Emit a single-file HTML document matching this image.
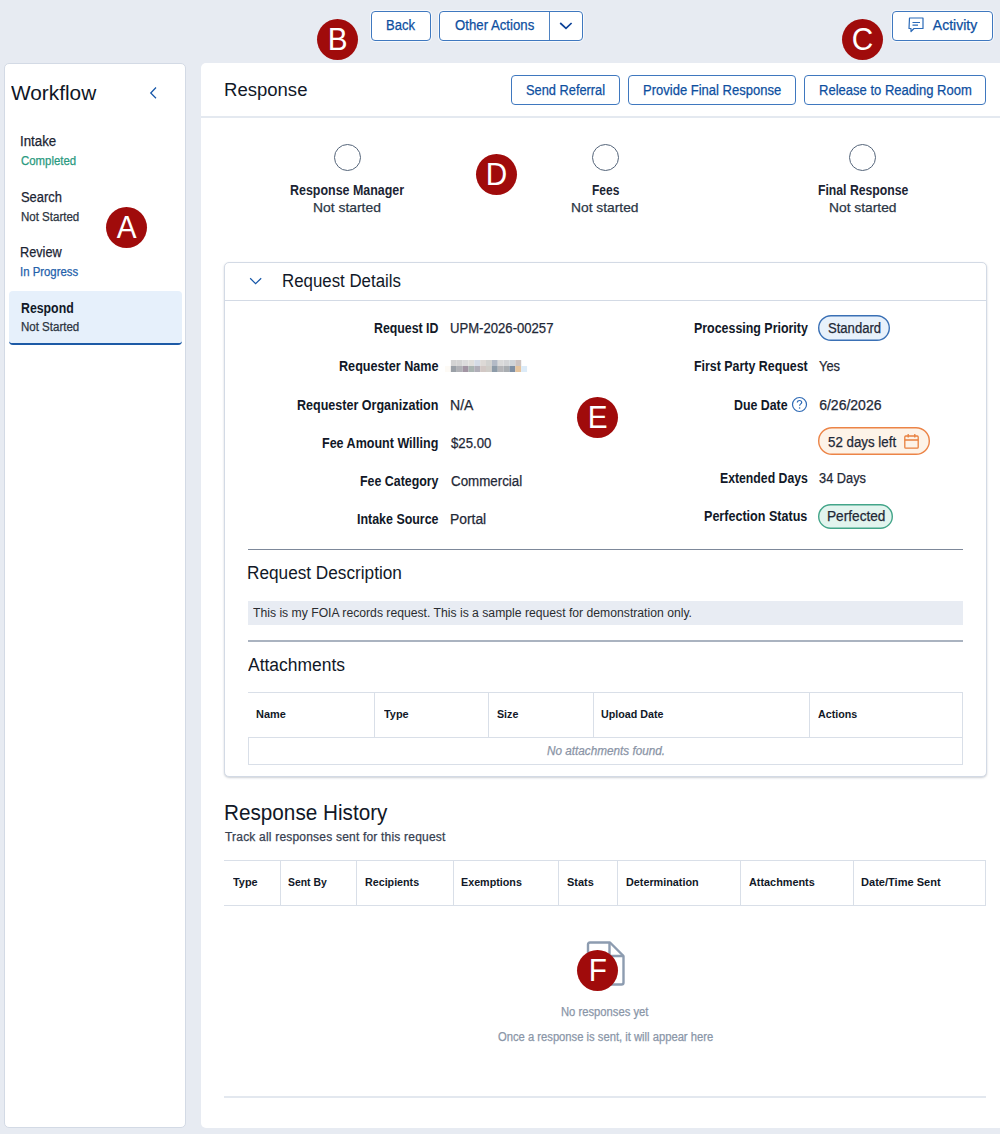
<!DOCTYPE html>
<html><head><meta charset="utf-8">
<style>
*{box-sizing:border-box;margin:0;padding:0}
html,body{width:1000px;height:1134px;overflow:hidden;background:#e7ebf2;font-family:"Liberation Sans",sans-serif}
.a{position:absolute}
.t{position:absolute;white-space:nowrap;line-height:1;transform-origin:0 0}
.btn{position:absolute;background:#fff;border:1px solid #3f78bf;border-radius:4px}
.tb{box-shadow:0 0 0 1px rgba(255,255,255,0.7)}
.mk{position:absolute;width:41px;height:41px;border-radius:50%;background:#a00b0b;color:#fff;font-size:32px;line-height:41px;text-align:center;font-family:"Liberation Sans",sans-serif}
.mk span{display:inline-block;transform:scaleX(0.93)}
.hl{position:absolute;height:1px;background:#d9dfe8}
.vl{position:absolute;width:1px;background:#d9dfe8}
.pill{position:absolute;border-radius:14px;border:1px solid}
.blk{position:absolute;width:6px;height:6px}
</style></head><body>
<!-- top buttons -->
<div class="btn tb" style="left:371px;top:11px;width:60px;height:30px"></div>
<div class="btn tb" style="left:439px;top:11px;width:144px;height:30px"></div>
<div class="a" style="left:549px;top:12px;width:1px;height:28px;background:#4f83c2"></div>
<svg class="a" style="left:556px;top:18px" width="20" height="14" viewBox="0 0 20 14"><path d="M4.2 5 L10 10.3 L15.6 5" fill="none" stroke="#0b4198" stroke-width="1.7"/></svg>
<div class="btn tb" style="left:892px;top:11px;width:101px;height:30px"></div>
<svg class="a" style="left:906px;top:15px" width="20" height="20" viewBox="0 0 20 20"><path d="M3.5 3 H17 V13.5 H8 L5 16.5 V13.5 H3 Z" fill="none" stroke="#2a6ab8" stroke-width="1.2" stroke-linejoin="round"/><path d="M6.5 7.5 H14 M6.5 10.2 H12" stroke="#2a6ab8" stroke-width="1.2"/></svg>

<!-- sidebar -->
<div class="a" style="left:4px;top:63px;width:182px;height:1065px;background:#fff;border:1px solid #d3dae5;border-radius:5px"></div>
<svg class="a" style="left:146px;top:85px" width="14" height="16" viewBox="0 0 14 16"><path d="M10 2.5 L4.75 8 L10 13.2" fill="none" stroke="#1556a8" stroke-width="1.25"/></svg>
<div class="a" style="left:9px;top:291px;width:173px;height:54px;background:#e6f0fb;border-radius:4px;border-bottom:2px solid #1d5aa6"></div>

<!-- main panel -->
<div class="a" style="left:201px;top:63px;width:810px;height:1065px;background:#fff;border-radius:5px"></div>
<div class="a" style="left:201px;top:116px;width:799px;height:2px;background:#e4e9f0"></div>
<div class="btn" style="left:511px;top:75px;width:109px;height:30px"></div>
<div class="btn" style="left:628px;top:75px;width:168px;height:30px"></div>
<div class="btn" style="left:804px;top:75px;width:182px;height:30px"></div>

<!-- steps circles -->
<div class="a" style="left:334px;top:144px;width:27px;height:27px;border-radius:50%;border:1px solid #55657a"></div>
<div class="a" style="left:592px;top:144px;width:27px;height:27px;border-radius:50%;border:1px solid #55657a"></div>
<div class="a" style="left:849px;top:144px;width:27px;height:27px;border-radius:50%;border:1px solid #55657a"></div>

<!-- request details card -->
<div class="a" style="left:224px;top:262px;width:763px;height:515px;background:#fff;border:1px solid #d3dae5;border-radius:5px;box-shadow:0 1px 2px rgba(60,70,90,0.25)"></div>
<div class="a" style="left:225px;top:300px;width:761px;height:1px;background:#d3dae5"></div>
<svg class="a" style="left:248px;top:274px" width="16" height="14" viewBox="0 0 16 14"><path d="M2.15 4.3 L7.6 9.7 L13.2 4.3" fill="none" stroke="#1556a8" stroke-width="1.2"/></svg>

<!-- blurred name -->
<svg class="a" style="left:445px;top:360px" width="84" height="12"><rect x="0" y="6" width="5.88" height="6" fill="#fdfaf5"/><rect x="5.86" y="0" width="5.88" height="6" fill="#d3d3d3"/><rect x="11.72" y="0" width="5.88" height="6" fill="#d4d4d4"/><rect x="17.58" y="0" width="5.88" height="6" fill="#dcdcdc"/><rect x="23.44" y="0" width="5.88" height="6" fill="#e0dfdc"/><rect x="29.30" y="0" width="5.88" height="6" fill="#d5dce6"/><rect x="35.16" y="0" width="5.88" height="6" fill="#ddd9d6"/><rect x="41.02" y="0" width="5.88" height="6" fill="#d2d2d0"/><rect x="46.88" y="0" width="5.88" height="6" fill="#b3bac6"/><rect x="52.74" y="0" width="5.88" height="6" fill="#dadada"/><rect x="58.60" y="0" width="5.88" height="6" fill="#d4d5d7"/><rect x="64.46" y="0" width="5.88" height="6" fill="#d0d4d8"/><rect x="70.32" y="0" width="5.88" height="6" fill="#cdc4c2"/><rect x="5.86" y="6" width="5.88" height="6" fill="#9aa0a7"/><rect x="11.72" y="6" width="5.88" height="6" fill="#b0b1b6"/><rect x="17.58" y="6" width="5.88" height="6" fill="#a295a3"/><rect x="23.44" y="6" width="5.88" height="6" fill="#aab5b2"/><rect x="29.30" y="6" width="5.88" height="6" fill="#b0aeb8"/><rect x="35.16" y="6" width="5.88" height="6" fill="#d2c8c5"/><rect x="41.02" y="6" width="5.88" height="6" fill="#d0cdc8"/><rect x="46.88" y="6" width="5.88" height="6" fill="#8d9ba8"/><rect x="52.74" y="6" width="5.88" height="6" fill="#b5b5b8"/><rect x="58.60" y="6" width="5.88" height="6" fill="#a9adb1"/><rect x="64.46" y="6" width="5.88" height="6" fill="#7f8fa3"/><rect x="70.32" y="6" width="5.88" height="6" fill="#e5c49e"/><rect x="76.18" y="6" width="5.88" height="6" fill="#dcebf8"/></svg>

<!-- pills -->
<svg class="a" style="left:817px;top:314px" width="74" height="28"><rect x="1.7" y="1.7" width="70.6" height="24.6" rx="12.3" fill="#e8f1fb" stroke="#3a70b5" stroke-width="1.4"/></svg>
<svg class="a" style="left:791px;top:396.4px" width="17" height="17" viewBox="0 0 17 17"><circle cx="8.5" cy="8.5" r="7" fill="none" stroke="#2e6ab5" stroke-width="1.2"/><path d="M6.3 6.6 C6.3 5.2 7.3 4.5 8.5 4.5 C9.8 4.5 10.7 5.3 10.7 6.4 C10.7 7.8 8.6 8 8.6 9.7" fill="none" stroke="#2e6ab5" stroke-width="1.2"/><circle cx="8.6" cy="12" r="0.8" fill="#2e6ab5"/></svg>
<svg class="a" style="left:817px;top:426px" width="114" height="30"><rect x="1.7" y="1.7" width="110.6" height="26.6" rx="13.3" fill="#fdf3e8" stroke="#ec8447" stroke-width="1.4"/></svg>
<svg class="a" style="left:903px;top:433px" width="17" height="17" viewBox="0 0 17 17"><rect x="1.8" y="3" width="13.4" height="12.2" rx="1" fill="none" stroke="#e8803f" stroke-width="1.3"/><path d="M1.8 7 H15.2 M5.2 1 V4.5 M11.8 1 V4.5" stroke="#e8803f" stroke-width="1.3"/></svg>
<svg class="a" style="left:817px;top:503px" width="77" height="27"><rect x="1.7" y="1.7" width="73.6" height="23.6" rx="11.8" fill="#e2f4ee" stroke="#43a589" stroke-width="1.4"/></svg>

<!-- dividers & description -->
<div class="a" style="left:248px;top:549px;width:715px;height:1px;background:#7d889a"></div>
<div class="a" style="left:248px;top:601px;width:715px;height:24px;background:#e8ecf3"></div>
<div class="a" style="left:248px;top:640px;width:715px;height:2px;background:#aab3c0"></div>

<!-- attachments table -->
<div class="hl" style="left:248px;top:692px;width:715px"></div>
<div class="hl" style="left:248px;top:737px;width:715px"></div>
<div class="hl" style="left:248px;top:764px;width:715px"></div>
<div class="vl" style="left:248px;top:737px;height:28px"></div>
<div class="vl" style="left:962px;top:692px;height:73px"></div>
<div class="vl" style="left:374px;top:692px;height:45px"></div>
<div class="vl" style="left:488px;top:692px;height:45px"></div>
<div class="vl" style="left:593px;top:692px;height:45px"></div>
<div class="vl" style="left:809px;top:692px;height:45px"></div>

<!-- response history table -->
<div class="hl" style="left:224px;top:860px;width:762px"></div>
<div class="hl" style="left:224px;top:905px;width:762px"></div>
<div class="vl" style="left:985px;top:860px;height:46px"></div>
<div class="vl" style="left:280px;top:860px;height:45px"></div>
<div class="vl" style="left:356px;top:860px;height:45px"></div>
<div class="vl" style="left:453px;top:860px;height:45px"></div>
<div class="vl" style="left:558px;top:860px;height:45px"></div>
<div class="vl" style="left:617px;top:860px;height:45px"></div>
<div class="vl" style="left:740px;top:860px;height:45px"></div>
<div class="vl" style="left:853px;top:860px;height:45px"></div>

<!-- file icon -->
<svg class="a" style="left:584px;top:940px" width="44" height="48" viewBox="0 0 44 48"><path d="M4 4.5 Q4 2.5 6 2.5 H26 L39.5 16 V42.5 Q39.5 44.5 37.5 44.5 H6 Q4 44.5 4 42.5 Z" fill="none" stroke="#8d9cb0" stroke-width="2.4" stroke-linejoin="round"/><path d="M25.5 2.5 V16 H39.5" fill="none" stroke="#8d9cb0" stroke-width="2.4"/></svg>

<div class="a" style="left:224px;top:1096px;width:762px;height:2px;background:#e3e8ef"></div>

<div class="t" style="left:386.27px;top:17.95px;font-size:14px;color:#0e4f9f;-webkit-text-stroke:0.25px #0e4f9f;transform:scaleX(0.9318);">Back</div>
<div class="t" style="left:454.80px;top:17.95px;font-size:14px;color:#0e4f9f;-webkit-text-stroke:0.25px #0e4f9f;transform:scaleX(0.9432);">Other Actions</div>
<div class="t" style="left:932.80px;top:17.95px;font-size:14px;color:#0e4f9f;-webkit-text-stroke:0.25px #0e4f9f;">Activity</div>
<div class="t" style="left:11.00px;top:82.22px;font-size:21px;color:#0f1626;transform:scaleX(0.9909);">Workflow</div>
<div class="t" style="left:20.05px;top:134.35px;font-size:14px;color:#1b2433;-webkit-text-stroke:0.25px #1b2433;transform:scaleX(0.9504);">Intake</div>
<div class="t" style="left:21.00px;top:155.14px;font-size:12px;color:#2a9a80;-webkit-text-stroke:0.25px #2a9a80;transform:scaleX(0.9502);">Completed</div>
<div class="t" style="left:21.00px;top:189.75px;font-size:14px;color:#1b2433;-webkit-text-stroke:0.25px #1b2433;transform:scaleX(0.9226);">Search</div>
<div class="t" style="left:21.00px;top:211.04px;font-size:12px;color:#2b3340;-webkit-text-stroke:0.25px #2b3340;transform:scaleX(0.9596);">Not Started</div>
<div class="t" style="left:20.09px;top:244.75px;font-size:14px;color:#1b2433;-webkit-text-stroke:0.25px #1b2433;transform:scaleX(0.9084);">Review</div>
<div class="t" style="left:20.05px;top:265.64px;font-size:12px;color:#2461ab;-webkit-text-stroke:0.25px #2461ab;transform:scaleX(0.9477);">In Progress</div>
<div class="t" style="left:21.00px;top:300.55px;font-size:14px;font-weight:700;color:#111827;transform:scaleX(0.8797);">Respond</div>
<div class="t" style="left:21.00px;top:321.34px;font-size:12px;color:#2b3340;-webkit-text-stroke:0.25px #2b3340;transform:scaleX(0.9596);">Not Started</div>
<div class="t" style="left:223.77px;top:81.46px;font-size:18px;color:#111827;transform:scaleX(1.0295);">Response</div>
<div class="t" style="left:526.00px;top:83.15px;font-size:14px;color:#0e4f9f;-webkit-text-stroke:0.25px #0e4f9f;transform:scaleX(0.9157);">Send Referral</div>
<div class="t" style="left:642.82px;top:83.15px;font-size:14px;color:#0e4f9f;-webkit-text-stroke:0.25px #0e4f9f;transform:scaleX(0.9300);">Provide Final Response</div>
<div class="t" style="left:819.07px;top:83.15px;font-size:14px;color:#0e4f9f;-webkit-text-stroke:0.25px #0e4f9f;transform:scaleX(0.9305);">Release to Reading Room</div>
<div class="t" style="left:290.20px;top:183.35px;font-size:14px;font-weight:700;color:#1b2433;transform:scaleX(0.8889);">Response Manager</div>
<div class="t" style="left:313.32px;top:200.57px;font-size:13.5px;color:#2b3645;-webkit-text-stroke:0.25px #2b3645;transform:scaleX(1.0276);">Not started</div>
<div class="t" style="left:591.50px;top:183.35px;font-size:14px;font-weight:700;color:#1b2433;transform:scaleX(0.8561);">Fees</div>
<div class="t" style="left:571.48px;top:200.57px;font-size:13.5px;color:#2b3645;-webkit-text-stroke:0.25px #2b3645;transform:scaleX(1.0229);">Not started</div>
<div class="t" style="left:818.00px;top:183.35px;font-size:14px;font-weight:700;color:#1b2433;transform:scaleX(0.8729);">Final Response</div>
<div class="t" style="left:828.98px;top:200.57px;font-size:13.5px;color:#2b3645;-webkit-text-stroke:0.25px #2b3645;transform:scaleX(1.0229);">Not started</div>
<div class="t" style="left:282.46px;top:272.16px;font-size:18px;color:#111827;transform:scaleX(0.9360);">Request Details</div>
<div class="t" style="left:374.00px;top:321.25px;font-size:14px;font-weight:700;color:#111827;transform:scaleX(0.8807);">Request ID</div>
<div class="t" style="left:449.66px;top:321.25px;font-size:14px;color:#1f2937;-webkit-text-stroke:0.25px #1f2937;transform:scaleX(0.9360);">UPM-2026-00257</div>
<div class="t" style="left:338.50px;top:359.48px;font-size:14px;font-weight:700;color:#111827;transform:scaleX(0.9015);">Requester Name</div>
<div class="t" style="left:297.40px;top:397.71px;font-size:14px;font-weight:700;color:#111827;transform:scaleX(0.8954);">Requester Organization</div>
<div class="t" style="left:449.60px;top:397.71px;font-size:14px;color:#1f2937;-webkit-text-stroke:0.25px #1f2937;transform:scaleX(1.0043);">N/A</div>
<div class="t" style="left:322.00px;top:435.94px;font-size:14px;font-weight:700;color:#111827;transform:scaleX(0.8947);">Fee Amount Willing</div>
<div class="t" style="left:450.60px;top:435.94px;font-size:14px;color:#1f2937;-webkit-text-stroke:0.25px #1f2937;transform:scaleX(0.9411);">$25.00</div>
<div class="t" style="left:359.60px;top:474.17px;font-size:14px;font-weight:700;color:#111827;transform:scaleX(0.8852);">Fee Category</div>
<div class="t" style="left:450.60px;top:474.17px;font-size:14px;color:#1f2937;-webkit-text-stroke:0.25px #1f2937;transform:scaleX(0.9535);">Commercial</div>
<div class="t" style="left:356.60px;top:512.40px;font-size:14px;font-weight:700;color:#111827;transform:scaleX(0.8878);">Intake Source</div>
<div class="t" style="left:449.61px;top:512.40px;font-size:14px;color:#1f2937;-webkit-text-stroke:0.25px #1f2937;transform:scaleX(0.9898);">Portal</div>
<div class="t" style="left:693.60px;top:321.15px;font-size:14px;font-weight:700;color:#111827;transform:scaleX(0.8865);">Processing Priority</div>
<div class="t" style="left:827.90px;top:320.75px;font-size:14px;color:#1f2937;-webkit-text-stroke:0.25px #1f2937;transform:scaleX(0.9334);">Standard</div>
<div class="t" style="left:693.60px;top:359.35px;font-size:14px;font-weight:700;color:#111827;transform:scaleX(0.8857);">First Party Request</div>
<div class="t" style="left:819.20px;top:359.35px;font-size:14px;color:#1f2937;-webkit-text-stroke:0.25px #1f2937;transform:scaleX(0.9195);">Yes</div>
<div class="t" style="left:733.80px;top:397.95px;font-size:14px;font-weight:700;color:#111827;transform:scaleX(0.8835);">Due Date</div>
<div class="t" style="left:819.20px;top:397.95px;font-size:14px;color:#1f2937;-webkit-text-stroke:0.25px #1f2937;">6/26/2026</div>
<div class="t" style="left:827.80px;top:434.65px;font-size:14px;color:#1f2937;-webkit-text-stroke:0.25px #1f2937;transform:scaleX(0.9511);">52 days left</div>
<div class="t" style="left:719.60px;top:471.35px;font-size:14px;font-weight:700;color:#111827;transform:scaleX(0.8749);">Extended Days</div>
<div class="t" style="left:819.20px;top:471.35px;font-size:14px;color:#1f2937;-webkit-text-stroke:0.25px #1f2937;transform:scaleX(0.9151);">34 Days</div>
<div class="t" style="left:704.10px;top:509.15px;font-size:14px;font-weight:700;color:#111827;transform:scaleX(0.8973);">Perfection Status</div>
<div class="t" style="left:826.82px;top:509.15px;font-size:14px;color:#1f2937;-webkit-text-stroke:0.25px #1f2937;transform:scaleX(0.9753);">Perfected</div>
<div class="t" style="left:247.04px;top:564.36px;font-size:18px;color:#111827;transform:scaleX(0.9558);">Request Description</div>
<div class="t" style="left:253.40px;top:606.84px;font-size:12px;color:#2a2c30;-webkit-text-stroke:0.25px #2a2c30;transform:scaleX(1.0152);-webkit-text-stroke:0;">This is my FOIA records request. This is a sample request for demonstration only.</div>
<div class="t" style="left:248.00px;top:655.76px;font-size:18px;color:#111827;transform:scaleX(0.9696);">Attachments</div>
<div class="t" style="left:256.00px;top:709.27px;font-size:11.5px;font-weight:700;color:#111827;transform:scaleX(0.9507);">Name</div>
<div class="t" style="left:383.70px;top:709.27px;font-size:11.5px;font-weight:700;color:#111827;transform:scaleX(0.9495);">Type</div>
<div class="t" style="left:496.80px;top:709.27px;font-size:11.5px;font-weight:700;color:#111827;transform:scaleX(0.9286);">Size</div>
<div class="t" style="left:601.30px;top:709.27px;font-size:11.5px;font-weight:700;color:#111827;transform:scaleX(0.9311);">Upload Date</div>
<div class="t" style="left:818.00px;top:709.27px;font-size:11.5px;font-weight:700;color:#111827;transform:scaleX(0.9288);">Actions</div>
<div class="t" style="left:547.10px;top:744.84px;font-size:12px;color:#8a94a6;font-style:italic;-webkit-text-stroke:0.25px #8a94a6;transform:scaleX(0.9782);">No attachments found.</div>
<div class="t" style="left:224.06px;top:802.18px;font-size:22px;color:#111827;transform:scaleX(0.9413);">Response History</div>
<div class="t" style="left:225.00px;top:830.64px;font-size:12px;color:#374151;-webkit-text-stroke:0.25px #374151;letter-spacing:0.2px;">Track all responses sent for this request</div>
<div class="t" style="left:232.50px;top:876.77px;font-size:11.5px;font-weight:700;color:#111827;transform:scaleX(0.9476);">Type</div>
<div class="t" style="left:288.25px;top:876.77px;font-size:11.5px;font-weight:700;color:#111827;transform:scaleX(0.9040);">Sent By</div>
<div class="t" style="left:365.00px;top:876.77px;font-size:11.5px;font-weight:700;color:#111827;transform:scaleX(0.9306);">Recipients</div>
<div class="t" style="left:461.00px;top:876.77px;font-size:11.5px;font-weight:700;color:#111827;transform:scaleX(0.9338);">Exemptions</div>
<div class="t" style="left:566.60px;top:876.77px;font-size:11.5px;font-weight:700;color:#111827;transform:scaleX(0.9522);">Stats</div>
<div class="t" style="left:626.00px;top:876.77px;font-size:11.5px;font-weight:700;color:#111827;transform:scaleX(0.9393);">Determination</div>
<div class="t" style="left:748.70px;top:876.77px;font-size:11.5px;font-weight:700;color:#111827;transform:scaleX(0.9443);">Attachments</div>
<div class="t" style="left:861.40px;top:876.77px;font-size:11.5px;font-weight:700;color:#111827;transform:scaleX(0.9610);">Date/Time Sent</div>
<div class="t" style="left:561.25px;top:1006.09px;font-size:12px;color:#8a96a8;-webkit-text-stroke:0.25px #8a96a8;transform:scaleX(0.9357);">No responses yet</div>
<div class="t" style="left:497.50px;top:1031.09px;font-size:12px;color:#8a96a8;-webkit-text-stroke:0.25px #8a96a8;transform:scaleX(0.9351);">Once a response is sent, it will appear here</div>

<!-- markers -->
<div class="mk" style="left:106px;top:207px"><span>A</span></div>
<div class="mk" style="left:317px;top:19px"><span>B</span></div>
<div class="mk" style="left:842px;top:19px"><span>C</span></div>
<div class="mk" style="left:476px;top:154px"><span>D</span></div>
<div class="mk" style="left:577px;top:397px"><span>E</span></div>
<div class="mk" style="left:577px;top:950px"><span>F</span></div>
</body></html>
